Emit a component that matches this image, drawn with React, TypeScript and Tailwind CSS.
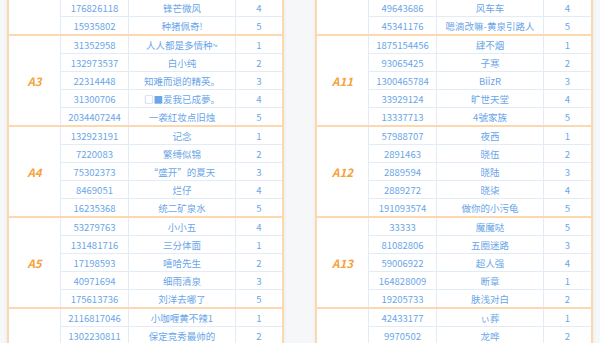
type Row = [string, string, string];

interface Group {
  label: string;
  rows: Row[];
}

const leftGroups: Group[] = [
  {
    label: "",
    rows: [
      ["176826118", "锋芒微风", "4"],
      ["15935802", "种猪佩奇!", "5"],
    ],
  },
  {
    label: "A3",
    rows: [
      ["31352958", "人人都是多情种~", "1"],
      ["132973537", "白小纯", "2"],
      ["22314448", "知难而退的精英。", "3"],
      ["31300706", "□■爱我已成夢。", "4"],
      ["2034407244", "一袭红妆点旧烛", "5"],
    ],
  },
  {
    label: "A4",
    rows: [
      ["132923191", "记念", "1"],
      ["7220083", "繁缚似锦", "2"],
      ["75302373", "“盛开”的夏天", "3"],
      ["8469051", "烂仔", "4"],
      ["16235368", "统二矿泉水", "5"],
    ],
  },
  {
    label: "A5",
    rows: [
      ["53279763", "小小五", "4"],
      ["131481716", "三分体面", "1"],
      ["17198593", "嘻哈先生", "2"],
      ["40971694", "细雨清泉", "3"],
      ["175613736", "刘洋去哪了", "5"],
    ],
  },
  {
    label: "",
    rows: [
      ["2116817046", "小咖喱黄不辣1", "1"],
      ["1302230811", "保定竞秀最帅的", "2"],
    ],
  },
];

const rightGroups: Group[] = [
  {
    label: "",
    rows: [
      ["49643686", "风车车", "4"],
      ["45341176", "嗯滴改嘛-黄泉引路人", "5"],
    ],
  },
  {
    label: "A11",
    rows: [
      ["1875154456", "肆不烟", "1"],
      ["93065425", "子寒", "2"],
      ["1300465784", "BiizR", "3"],
      ["33929124", "旷世天堂", "4"],
      ["13337713", "4號家族", "5"],
    ],
  },
  {
    label: "A12",
    rows: [
      ["57988707", "夜西", "1"],
      ["2891463", "晓伍", "2"],
      ["2889594", "晓陆", "3"],
      ["2889272", "晓柒", "4"],
      ["191093574", "做你的小污龟", "5"],
    ],
  },
  {
    label: "A13",
    rows: [
      ["33333", "魔魔哒", "5"],
      ["81082806", "五圈迷路", "3"],
      ["59006922", "超人强", "4"],
      ["164828009", "断章", "1"],
      ["19205733", "肤浅对白", "2"],
    ],
  },
  {
    label: "",
    rows: [
      ["42433177", "ぃ葬", "1"],
      ["9970502", "龙哗", "2"],
    ],
  },
];

function GroupBlock({ group }: { group: Group }) {
  return (
    <div className="flex border-b-2 border-[#fbd8b0]">
      <div className="flex w-[52px] shrink-0 items-center justify-center border-r border-[#e2ecf8] text-[11.5px] font-bold italic text-[#f4a23a]">
        {group.label}
      </div>
      <div className="flex flex-1 flex-col">
        {group.rows.map((row, i) => (
          <div
            key={row[0]}
            className={`grid grid-cols-[68px_107px_1fr] items-center text-center ${
              i < group.rows.length - 1 ? "h-[18px] border-b border-[#e2ecf8]" : "h-[17px]"
            }`}
          >
            <div className="flex h-full items-center justify-center border-r border-[#e2ecf8]">{row[0]}</div>
            <div className="flex h-full items-center justify-center whitespace-nowrap border-r border-[#e2ecf8]">
              {row[1]}
            </div>
            <div className="flex h-full items-center justify-center">{row[2]}</div>
          </div>
        ))}
      </div>
    </div>
  );
}

function Table({ groups }: { groups: Group[] }) {
  return (
    <div className="border-x-2 border-[#fbd8b0] bg-white shadow-[0_0_4px_rgba(0,0,0,0.06)]">
      {groups.map((g, i) => (
        <GroupBlock key={g.label || `g${i}`} group={g} />
      ))}
    </div>
  );
}

export default function App() {
  return (
    <div
      className="h-[343px] w-[600px] overflow-hidden bg-[#f6f7f9] text-[9.5px] leading-[12px] text-[#6aa6e8]"
      style={{ fontFamily: '"Noto Sans CJK SC", "Noto Sans", sans-serif' }}
    >
      <div className="-mt-px flex gap-[31px] pl-[7px]">
        <div className="w-[277px]">
          <Table groups={leftGroups} />
        </div>
        <div className="w-[278px]">
          <Table groups={rightGroups} />
        </div>
      </div>
    </div>
  );
}
